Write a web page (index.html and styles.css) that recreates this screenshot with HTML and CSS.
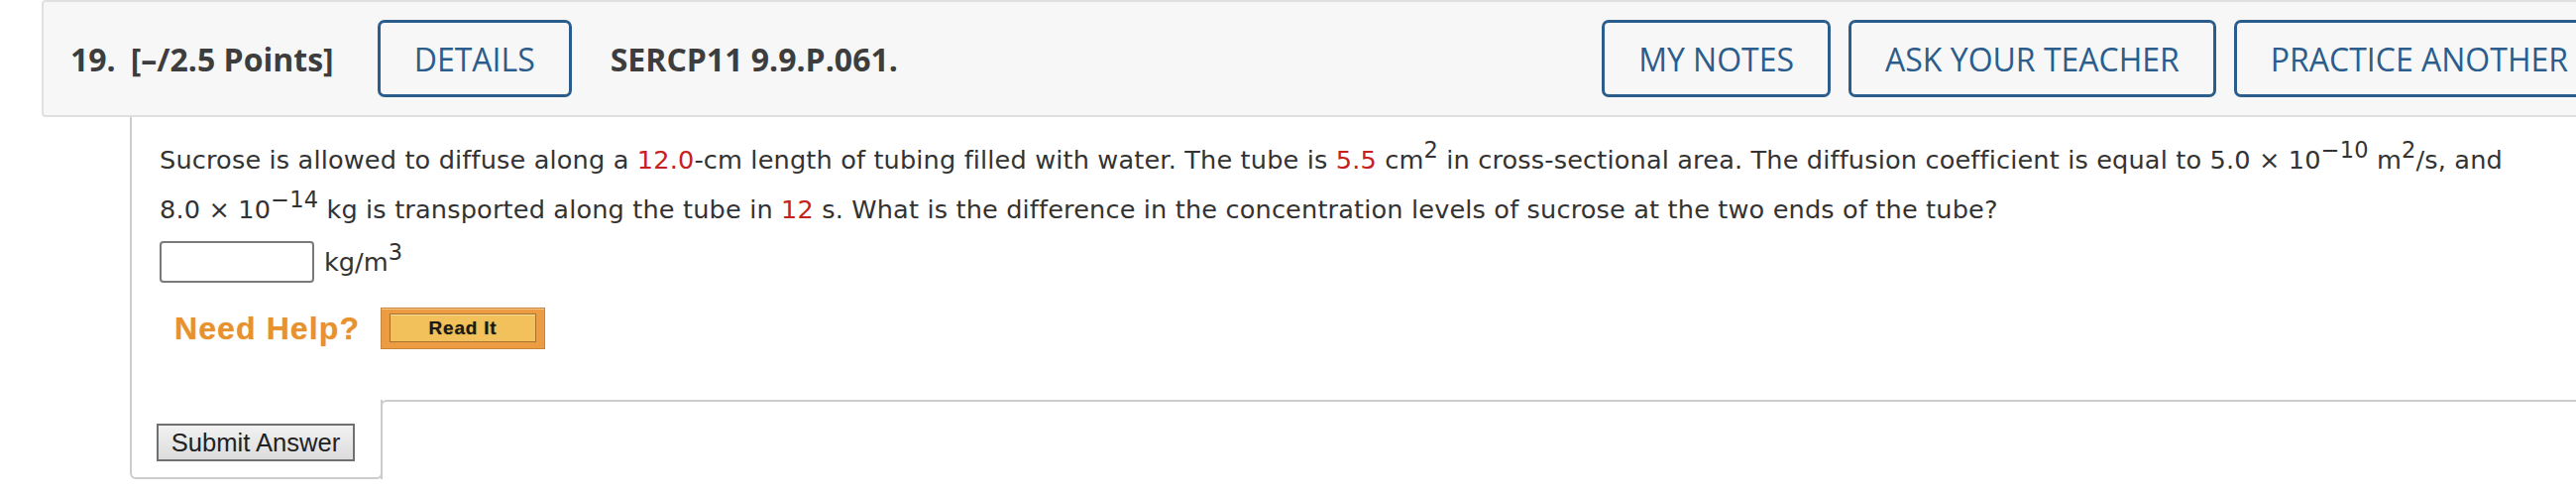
FILE: index.html
```html
<!DOCTYPE html>
<html lang="en">
<head>
<meta charset="utf-8">
<title>Question 19</title>
<link rel="stylesheet" href="styles.css">
</head>
<body>
<div class="page">
  <div class="q-header">
    <span class="q-num">19.</span>
    <span class="q-points">[–/2.5 Points]</span>
    <button class="hbtn hbtn-details">DETAILS</button>
    <span class="q-id">SERCP11 9.9.P.061.</span>
    <div class="hactions">
      <button class="hbtn">MY NOTES</button>
      <button class="hbtn">ASK YOUR TEACHER</button>
      <button class="hbtn">PRACTICE ANOTHER</button>
    </div>
  </div>
  <div class="q-wrap">
    <div class="q-body">
      <p class="q-text">Sucrose is allowed to diffuse along a <span class="red">12.0</span>-cm length of tubing filled with water. The tube is <span class="red">5.5</span> cm<sup>2</sup> in cross-sectional area. The diffusion coefficient is equal to 5.0&nbsp;×&nbsp;10<sup>−10</sup> m<sup>2</sup>/s, and 8.0&nbsp;×&nbsp;10<sup>−14</sup> kg is transported along the tube in <span class="red">12</span> s. What is the difference in the concentration levels of sucrose at the two ends of the tube?</p>
      <div class="answer">
        <input class="ans-input" type="text" aria-label="answer">
        <span class="unit">kg/m<sup>3</sup></span>
      </div>
      <div class="help">
        <span class="need">Need Help?</span>
        <button class="readit"><span class="readit-inner">Read It</span></button>
      </div>
    </div>
    <div class="q-foot">
      <div class="submit-cell">
        <button class="submit">Submit Answer</button>
      </div>
      <div class="foot-rest"></div>
    </div>
  </div>
</div>
</body>
</html>
```

FILE: styles.css
```css
html, body {
  margin: 0;
  padding: 0;
  overflow: hidden;
  background: #ffffff;
}

.page {
  width: 2700px;
  padding-left: 42px;
  box-sizing: border-box;
}

.q-header {
  box-sizing: border-box;
  width: 2606px;
  height: 118px;
  display: flex;
  align-items: center;
  padding: 0 18px 0 27px;
  background: #f7f7f7;
  border: 2px solid #e0e0e0;
  border-radius: 4px;
  font-family: "Open Sans", "Liberation Sans", sans-serif;
  color: #3d3d3d;
}

.q-num,
.q-points,
.q-id {
  font-size: 32px;
  font-weight: 700;
  white-space: nowrap;
}

.q-points {
  margin-left: 15px;
}

.q-id {
  margin-left: 39px;
}

.hbtn {
  box-sizing: border-box;
  height: 78px;
  padding: 0 34px;
  background: #f7f7f7;
  border: 3px solid #2b5d8c;
  border-radius: 7px;
  color: #2b5d8c;
  font-family: "Open Sans", "Liberation Sans", sans-serif;
  font-size: 32px;
  font-weight: 400;
  white-space: nowrap;
  cursor: pointer;
}

.hbtn-details {
  margin-left: 44px;
}

.hactions {
  margin-left: auto;
  display: flex;
  gap: 18px;
}

.q-wrap {
  margin-left: 89px;
}

.q-body {
  border-left: 2px solid #cccccc;
  padding: 18px 0 51px 28px;
  font-family: "DejaVu Sans", Verdana, sans-serif;
  font-size: 25.6px;
  color: #333333;
}

.q-text {
  margin: 0;
  max-width: 2450px;
  line-height: 50px;
  letter-spacing: 0.15px;
}

sup {
  font-size: 0.88em;
  line-height: 0;
  vertical-align: 0.5em;
}

.red {
  color: #c8201c;
}

.answer {
  margin-top: 7px;
  display: flex;
  align-items: center;
}

.ans-input {
  box-sizing: border-box;
  width: 156px;
  height: 42px;
  margin: 0;
  border: 2px solid #7a7a7a;
  border-radius: 4px;
  background: #ffffff;
}

.unit {
  margin-left: 10px;
  line-height: normal;
}

.help {
  margin-top: 25px;
  display: flex;
  align-items: center;
}

.need {
  margin-left: 15px;
  font-family: "Liberation Sans", Arial, sans-serif;
  font-size: 32px;
  font-weight: 700;
  letter-spacing: 1.1px;
  color: #e8912f;
  text-shadow: 0 0 1px rgba(232, 145, 47, 0.6);
}

.readit {
  box-sizing: border-box;
  width: 166px;
  height: 42px;
  margin-left: 21px;
  padding: 5px 8px 6px 8px;
  background: #ec9c42;
  border: 1px solid #c8863a;
  box-shadow: inset 0 1px 0 #f6c48a;
  cursor: pointer;
  display: flex;
}

.readit-inner {
  flex: 1;
  display: flex;
  align-items: center;
  justify-content: center;
  background: #f2c15b;
  border: 1px solid #a8712c;
  box-shadow: inset 0 1px 0 #f8dc9a;
  font-family: "Liberation Sans", Arial, sans-serif;
  font-size: 19px;
  font-weight: 700;
  letter-spacing: 0.8px;
  color: #1e1a12;
  text-shadow: 0 0 1px rgba(30, 26, 18, 0.5);
}

.q-foot {
  display: flex;
}

.submit-cell {
  box-sizing: border-box;
  width: 255px;
  padding: 24px 0 16px 25px;
  border-left: 2px solid #cccccc;
  border-right: 2px solid #cccccc;
  border-bottom: 2px solid #cccccc;
  border-radius: 0 0 6px 6px;
}

.submit {
  box-sizing: border-box;
  width: 200px;
  height: 38px;
  padding: 0;
  border: 2px solid #707070;
  background: linear-gradient(#f2f2f2, #dcdcdc);
  font-family: "Liberation Sans", Arial, sans-serif;
  font-size: 25.6px;
  color: #222222;
  cursor: pointer;
}

.foot-rest {
  flex: 1;
  margin-left: -2px;
  border-top: 2px solid #cccccc;
  border-left: 2px solid #cccccc;
  border-top-left-radius: 6px;
}
```
